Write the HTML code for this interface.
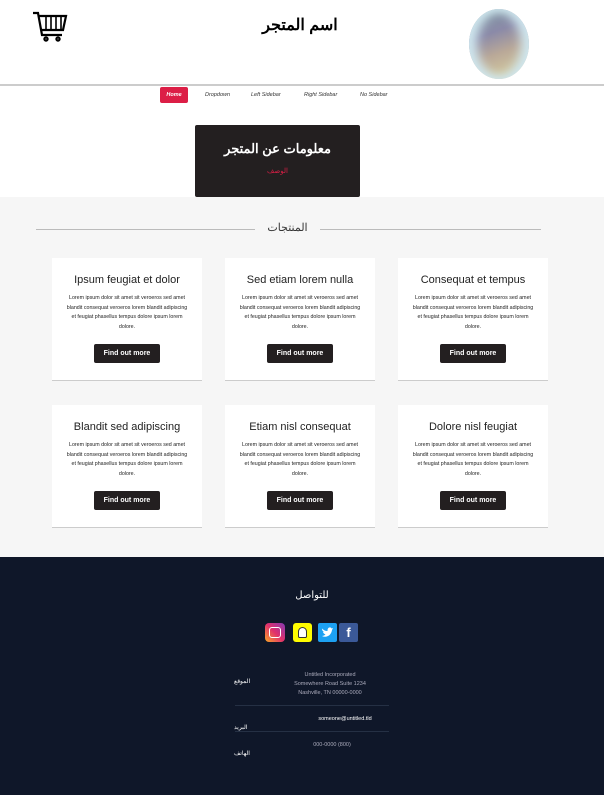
<!DOCTYPE html><html><head><meta charset="utf-8"><style>
*{margin:0;padding:0;box-sizing:border-box}
body{width:604px;height:795px;overflow:hidden;font-family:"Liberation Sans","Noto Sans CJK SC",sans-serif;background:#fff;position:relative}
.a{position:absolute}
.card{position:absolute;width:150px;height:123px;background:#fff;border-bottom:1px solid #ccc;text-align:center}
.card h3{font-weight:normal;font-size:11px;color:#222;margin-top:16px}
.card p{font-size:5.3px;line-height:9.5px;color:#222;margin:8px 12px 0;height:40px}
.card b{display:inline-block;margin-top:10px;background:#231f20;color:#fff;font-size:7px;width:66px;height:19px;line-height:19px;border-radius:2px}
.f{color:#aab;font-size:5.5px;text-align:center}
</style></head><body>
<svg class="a" style="left:32px;top:11px" width="36" height="31" viewBox="0 0 36 31" fill="none" stroke="#000" stroke-width="2.2"><path d="M1 2h5l4 22h20"/><path d="M7 5h27l-3 14H10"/><path d="M14 6v12M19 6v12M24 6v12M29 6v12" stroke-width="1.6"/><circle cx="14" cy="28" r="1.6"/><circle cx="26" cy="28" r="1.6"/></svg>
<div class="a" style="left:240px;top:15px;width:120px;text-align:center;font-size:16px;font-weight:bold">اسم المتجر</div>
<div class="a" style="left:469px;top:9px;width:60px;height:70px;border-radius:50%;background:linear-gradient(160deg,#7d9aa0 0%,#8b8aa8 35%,#b9a898 60%,#d1c79f 85%);box-shadow:inset 8px 0 10px #cfe6ee,inset -8px 0 10px #cfe6ee"></div>
<div class="a" style="left:0;top:84px;width:604px;height:2px;background:#ccc"></div>
<div class="a" style="left:160px;top:87px;width:28px;height:16px;background:#dc1e46;border-radius:2px;color:#fff;font-size:5.5px;font-style:italic;font-weight:bold;text-align:center;line-height:16px">Home</div>
<div class="a" style="top:92px;left:205px;font-size:5.5px;font-style:italic;color:#333">Dropdown</div>
<div class="a" style="top:92px;left:251px;font-size:5.5px;font-style:italic;color:#333">Left Sidebar</div>
<div class="a" style="top:92px;left:304px;font-size:5.5px;font-style:italic;color:#333">Right Sidebar</div>
<div class="a" style="top:92px;left:360px;font-size:5.5px;font-style:italic;color:#333">No Sidebar</div>
<div class="a" style="left:0;top:197px;width:604px;height:360px;background:#f6f6f6"></div>
<div class="a" style="left:195px;top:125px;width:165px;height:72px;background:#231f20;border-radius:2px;text-align:center;color:#fff">
<div style="font-size:13px;font-weight:bold;margin-top:16px">معلومات عن المتجر</div>
<div style="font-size:7px;color:#dc1e46;margin-top:10px">الوصف</div></div>
<div class="a" style="left:36px;top:229px;width:219px;height:1px;background:#bbb"></div>
<div class="a" style="left:320px;top:229px;width:221px;height:1px;background:#bbb"></div>
<div class="a" style="left:255px;top:221px;width:65px;text-align:center;font-size:11px;color:#333">المنتجات</div>
<div class="card" style="left:52px;top:258px"><h3>Ipsum feugiat et dolor</h3><p>Lorem ipsum dolor sit amet sit veroeros sed amet blandit consequat veroeros lorem blandit adipiscing et feugiat phasellus tempus dolore ipsum lorem dolore.</p><b>Find out more</b></div>
<div class="card" style="left:225px;top:258px"><h3>Sed etiam lorem nulla</h3><p>Lorem ipsum dolor sit amet sit veroeros sed amet blandit consequat veroeros lorem blandit adipiscing et feugiat phasellus tempus dolore ipsum lorem dolore.</p><b>Find out more</b></div>
<div class="card" style="left:398px;top:258px"><h3>Consequat et tempus</h3><p>Lorem ipsum dolor sit amet sit veroeros sed amet blandit consequat veroeros lorem blandit adipiscing et feugiat phasellus tempus dolore ipsum lorem dolore.</p><b>Find out more</b></div>
<div class="card" style="left:52px;top:405px"><h3>Blandit sed adipiscing</h3><p>Lorem ipsum dolor sit amet sit veroeros sed amet blandit consequat veroeros lorem blandit adipiscing et feugiat phasellus tempus dolore ipsum lorem dolore.</p><b>Find out more</b></div>
<div class="card" style="left:225px;top:405px"><h3>Etiam nisl consequat</h3><p>Lorem ipsum dolor sit amet sit veroeros sed amet blandit consequat veroeros lorem blandit adipiscing et feugiat phasellus tempus dolore ipsum lorem dolore.</p><b>Find out more</b></div>
<div class="card" style="left:398px;top:405px"><h3>Dolore nisl feugiat</h3><p>Lorem ipsum dolor sit amet sit veroeros sed amet blandit consequat veroeros lorem blandit adipiscing et feugiat phasellus tempus dolore ipsum lorem dolore.</p><b>Find out more</b></div>
<div class="a" style="left:0;top:557px;width:604px;height:238px;background:#0f1729"></div>
<div class="a" style="left:272px;top:590px;width:80px;text-align:center;color:#fff;font-size:10px">للتواصل</div>
<div class="a" style="left:265px;top:623px;width:20px;height:19px;border-radius:4px;background:linear-gradient(45deg,#f9a825,#e1306c,#833ab4)"><div style="margin:4px;width:12px;height:11px;border:1.5px solid #fff;border-radius:3px"></div></div>
<div class="a" style="left:293px;top:623px;width:19px;height:19px;border-radius:3px;background:#fffc00"><div style="margin:4px auto 0;width:9px;height:11px;background:#fff;border:1px solid #333;border-radius:5px 5px 2px 2px"></div></div>
<svg class="a" style="left:318px;top:623px" width="19" height="19" viewBox="0 0 19 19"><rect width="19" height="19" rx="2" fill="#1da1f2"/><path d="M4 13c4 2 9 0 10-6l1-2-1.5.5C13 4 11 4 10 5.5 9.5 6.5 9.5 7 9.5 8 7 8 5.5 7 4 5.5c0 2 1 3 2 3.5H5c.5 1.5 1.5 2 2.5 2.5C6.5 12.5 5 13 4 13z" fill="#fff"/></svg>
<div class="a" style="left:339px;top:623px;width:19px;height:19px;border-radius:2px;background:#3b5998;color:#fff;font-size:13px;font-weight:bold;text-align:center;line-height:20px">f</div>
<div class="a f" style="left:290px;top:671px;width:80px;line-height:9px">Untitled Incorporated<br>Somewhere Road Suite 1234<br>Nashville, TN 00000-0000</div>
<div class="a" style="left:234px;top:678px;color:#fff;font-size:6px">الموقع</div>
<div class="a" style="left:235px;top:705px;width:154px;height:1px;background:#253044"></div>
<div class="a f" style="left:290px;top:716px;width:110px;color:#fff">someone@untitled.tld</div>
<div class="a" style="left:234px;top:724px;color:#fff;font-size:6px">البريد</div>
<div class="a" style="left:235px;top:731px;width:154px;height:1px;background:#253044"></div>
<div class="a f" style="left:290px;top:742px;width:84px">000-0000 (800)</div>
<div class="a" style="left:234px;top:750px;color:#fff;font-size:6px">الهاتف</div>
</body></html>
